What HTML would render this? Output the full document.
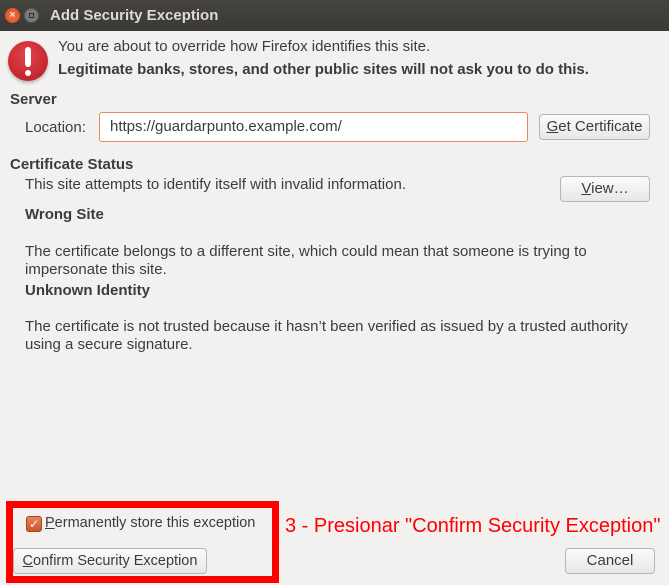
<!DOCTYPE html>
<html><head><style>
*{margin:0;padding:0;box-sizing:border-box}
body{width:669px;height:585px;background:#f2f1f0;font-family:"Liberation Sans","DejaVu Sans",sans-serif;font-size:15px;color:#3c3c3c;position:relative;overflow:hidden}
.a{position:absolute;white-space:nowrap}
.title{left:0;top:0;width:669px;height:31px;background:linear-gradient(#45443f,#3a3935);}
.btn{position:absolute;background:linear-gradient(#fbfbfb,#e8e7e6);border:1px solid #b9b6b2;border-radius:4px;text-align:center;line-height:24px;color:#3c3c3c}
b{font-weight:bold}
</style></head><body>
<div class="a title"></div>
<div class="a" style="left:5px;top:8px;width:15px;height:15px;border-radius:50%;background:radial-gradient(#f2784a,#d4441c);color:#fff;font-size:11px;line-height:15px;text-align:center">×</div>
<div class="a" style="left:24px;top:8px;width:15px;height:15px;border-radius:50%;background:#7a7975;border:1px solid #5a5955"><div style="position:absolute;left:4px;top:4px;width:5px;height:5px;border:1px solid #2f2f2f"></div></div>
<div class="a" style="left:50px;top:7px;color:#dfdbd2;font-weight:bold;font-size:15px">Add Security Exception</div>
<div class="a" style="left:8px;top:41px;width:40px;height:40px;border-radius:50%;background:radial-gradient(circle at 45% 35%,#e4434a,#b51a22);box-shadow:0 2px 3px rgba(0,0,0,.25)"></div>
<div class="a" style="left:25px;top:47px;width:6px;height:20px;background:#fff;border-radius:3px"></div>
<div class="a" style="left:25px;top:70px;width:6px;height:6px;background:#fff;border-radius:3px"></div>
<div class="a" style="left:58px;top:38px">You are about to override how Firefox identifies this site.</div>
<div class="a" style="left:58px;top:61px"><b>Legitimate banks, stores, and other public sites will not ask you to do this.</b></div>
<div class="a" style="left:10px;top:91px"><b>Server</b></div>
<div class="a" style="left:25px;top:119px">Location:</div>
<div class="a" style="left:99px;top:112px;width:429px;height:30px;background:#fff;border:1px solid #e9895e;border-radius:3px;padding:5px 10px">https://guardarpunto.example.com/</div>
<div class="btn" style="left:539px;top:114px;width:111px;height:26px"><u>G</u>et Certificate</div>
<div class="a" style="left:10px;top:156px"><b>Certificate Status</b></div>
<div class="a" style="left:25px;top:176px">This site attempts to identify itself with invalid information.</div>
<div class="btn" style="left:560px;top:176px;width:90px;height:26px"><u>V</u>iew…</div>
<div class="a" style="left:25px;top:206px"><b>Wrong Site</b></div>
<div class="a" style="left:25px;top:243px">The certificate belongs to a different site, which could mean that someone is trying to</div>
<div class="a" style="left:25px;top:261px">impersonate this site.</div>
<div class="a" style="left:25px;top:282px"><b>Unknown Identity</b></div>
<div class="a" style="left:25px;top:318px">The certificate is not trusted because it hasn’t been verified as issued by a trusted authority</div>
<div class="a" style="left:25px;top:336px">using a secure signature.</div>
<div class="a" style="left:26px;top:516px;width:16px;height:16px;border-radius:3px;background:linear-gradient(#e8835a,#c8582e);border:1px solid #a4461f;color:#fff;font-size:12px;line-height:14px;text-align:center">✓</div>
<div class="a" style="left:45px;top:515px;font-size:14.5px"><u>P</u>ermanently store this exception</div>
<div class="btn" style="left:13px;top:548px;width:194px;height:26px;font-size:14.5px"><u>C</u>onfirm Security Exception</div>
<div class="btn" style="left:565px;top:548px;width:90px;height:26px">Cancel</div>
<div class="a" style="left:6px;top:501px;width:273px;height:82px;border:7px solid #ff0000"></div>
<div class="a" style="left:285px;top:515px;color:#ff0000;font-size:20px">3 - Presionar "Confirm Security Exception"</div>
</body></html>
